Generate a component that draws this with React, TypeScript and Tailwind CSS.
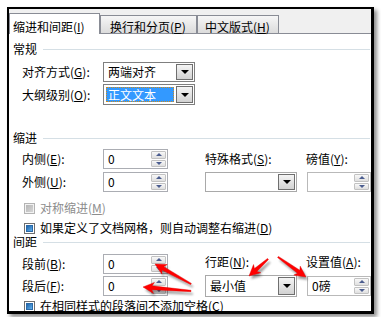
import React from "react";

const Acc = ({ k }: { k: string }) => (
  <>
    (<span className="underline">{k}</span>)
  </>
);

const Header = ({ title }: { title: string }) => (
  <div className="flex h-[16px] items-center pl-[4px] pr-[1px]">
    <span className="leading-[12px]">{title}</span>
    <div className="ml-[6px] h-px flex-1 bg-[#d5dfe5]" />
  </div>
);

const Label = ({ children, w = "w-[94px]" }: { children: React.ReactNode; w?: string }) => (
  <div className={`${w} shrink-0 pl-[13px] leading-[12px]`}>{children}</div>
);

const Tri = ({ up }: { up?: boolean }) =>
  up ? (
    <div className="h-0 w-0 border-b-[3px] border-l-[3px] border-r-[3px] border-b-[#4b5d8f] border-l-transparent border-r-transparent" />
  ) : (
    <div className="h-0 w-0 border-t-[3px] border-l-[3px] border-r-[3px] border-t-[#4b5d8f] border-l-transparent border-r-transparent" />
  );

const Spin = ({ value, w, light }: { value?: string; w: string; light?: boolean }) => (
  <div
    className={`${w} flex h-[20px] shrink-0 border bg-white ${
      light ? "border-[#b9b9b9]" : "border-[#abadb3]"
    }`}
  >
    <div className="flex flex-1 items-center pl-[4px] leading-[12px]">{value}</div>
    <div className="my-px mr-px flex w-[15px] flex-col gap-px">
      <div className="flex flex-1 items-center justify-center rounded-[1px] border border-[#c2c2c2] bg-linear-to-b from-[#f8f8f8] to-[#dfdfdf]">
        <Tri up />
      </div>
      <div className="flex flex-1 items-center justify-center rounded-[1px] border border-[#c2c2c2] bg-linear-to-b from-[#f8f8f8] to-[#dfdfdf]">
        <Tri />
      </div>
    </div>
  </div>
);

const Select = ({
  children,
  h = "h-[20px]",
  dark,
}: {
  children?: React.ReactNode;
  h?: string;
  dark?: boolean;
}) => (
  <div
    className={`flex w-[92px] ${h} shrink-0 border bg-white ${
      dark ? "border-[#7f7f7f]" : "border-[#a9a9a9]"
    }`}
  >
    <div className="flex min-w-0 flex-1 items-center">{children}</div>
    <div className="m-px flex w-[17px] items-center justify-center border border-[#6f6f6f] bg-linear-to-b from-[#f4f4f4] to-[#d2d2d2]">
      <div className="h-0 w-0 border-t-[4px] border-l-[4px] border-r-[4px] border-t-black border-l-transparent border-r-transparent" />
    </div>
  </div>
);

const Check = ({ disabled, children }: { disabled?: boolean; children: React.ReactNode }) => (
  <div className="flex h-[12px] items-center pl-[15px]">
    {disabled ? (
      <div className="flex h-[11px] w-[11px] shrink-0 items-center justify-center border border-[#b4b4b4] bg-[#f2f2f2]">
        <div className="h-[7px] w-[7px] bg-linear-to-br from-[#b5b5b5] to-[#d6d6d6]" />
      </div>
    ) : (
      <div className="flex h-[11px] w-[11px] shrink-0 items-center justify-center border border-[#6f6f6f] bg-white">
        <div className="h-[7px] w-[7px] border border-[#2b6aa8] bg-linear-to-br from-[#1f65ab] to-[#5fb0ec]" />
      </div>
    )}
    <span className={`ml-[5px] whitespace-nowrap leading-[12px] ${disabled ? "text-[#8d8d8d]" : ""}`}>
      {children}
    </span>
  </div>
);

function Arrow({ x1, y1, x2, y2 }: { x1: number; y1: number; x2: number; y2: number }) {
  const dx = x2 - x1;
  const dy = y2 - y1;
  const L = Math.hypot(dx, dy);
  const a = (Math.atan2(dy, dx) * 180) / Math.PI;
  const pts = `0,-0.7 ${L - 9},-1.9 ${L - 11},-5.5 ${L},0 ${L - 11},5.5 ${L - 9},1.9 0,0.7`;
  return (
    <g>
      <g transform="translate(2 3)">
        <polygon
          points={pts}
          transform={`translate(${x1} ${y1}) rotate(${a})`}
          fill="#000"
          opacity={0.4}
          filter="url(#ablur)"
        />
      </g>
      <polygon
        points={pts}
        transform={`translate(${x1} ${y1}) rotate(${a})`}
        fill="#ff0000"
        stroke="#e00000"
        strokeWidth={0.4}
      />
    </g>
  );
}

export default function App() {
  return (
    <div className="relative h-[317px] w-[381px] overflow-hidden bg-white pl-[7px] pt-[7px] font-['Noto_Sans_CJK_SC','Noto_Sans',sans-serif] text-[12px] text-black">
      <div className="flex h-[307px] w-[367px] flex-col overflow-hidden border-b-[3px] border-l-2 border-r-[3px] border-t-2 border-black bg-white shadow-[3px_3px_4px_rgba(0,0,0,0.45)]">
        {/* tabs */}
        <div className="flex h-[25px] shrink-0 items-end border-b border-[#898c95] bg-[#f0f0f0]">
          <div className="relative z-10 -mb-px h-[21px] w-[91px] shrink-0 whitespace-nowrap border-l border-r border-t border-[#898c95] bg-white pl-[3px] pt-[7px] leading-[12px]">
            缩进和间距<Acc k="I" />
          </div>
          <div className="h-[18px] w-[97px] shrink-0 whitespace-nowrap border border-b-0 border-[#898c95] bg-linear-to-b from-[#f6f6f6] to-[#dcdcdc] pl-[9px] pt-[5px] leading-[12px]">
            换行和分页<Acc k="P" />
          </div>
          <div className="h-[18px] w-[82px] shrink-0 whitespace-nowrap border border-b-0 border-[#898c95] bg-linear-to-b from-[#f6f6f6] to-[#dcdcdc] pl-[7px] pt-[5px] leading-[12px]">
            中文版式<Acc k="H" />
          </div>
        </div>

        {/* content */}
        <div className="flex flex-col">
          <div className="mt-[7px]">
            <Header title="常规" />
          </div>
          <div className="mt-[5px] flex h-[20px] items-center">
            <Label>
              对齐方式<Acc k="G" />:
            </Label>
            <Select dark>
              <span className="pl-[4px] leading-[12px]">两端对齐</span>
            </Select>
          </div>
          <div className="mt-[2px] flex h-[21px] items-center">
            <Label>
              大纲级别<Acc k="O" />:
            </Label>
            <Select dark h="h-[21px]">
              <div className="my-[2px] ml-[2px] mr-px flex h-[15px] flex-1 items-center border border-dotted border-[#d08a1a] bg-[#3399ff] pl-px leading-[12px] text-white">
                正文文本
              </div>
            </Select>
          </div>

          <div className="mt-[25px]">
            <Header title="缩进" />
          </div>
          <div className="mt-[3px] flex h-[20px] items-center">
            <Label>
              内侧<Acc k="E" />:
            </Label>
            <Spin value="0" w="w-[65px]" />
            <div className="ml-[37px] w-[92px] shrink-0 leading-[12px]">
              特殊格式<Acc k="S" />:
            </div>
            <div className="ml-[9px] leading-[12px]">
              磅值<Acc k="Y" />:
            </div>
          </div>
          <div className="mt-[3px] flex h-[20px] items-center">
            <Label>
              外侧<Acc k="U" />:
            </Label>
            <Spin value="0" w="w-[65px]" />
            <div className="ml-[37px]">
              <Select />
            </div>
            <div className="ml-[10px]">
              <Spin w="w-[64px]" light />
            </div>
          </div>

          <div className="mt-[10px]">
            <Check disabled>
              对称缩进<Acc k="M" />
            </Check>
          </div>
          <div className="mt-[8px]">
            <Check>
              如果定义了文档网格，则自动调整右缩进<Acc k="D" />
            </Check>
          </div>

          <Header title="间距" />
          <div className="mt-[4px] flex h-[20px] items-center">
            <Label>
              段前<Acc k="B" />:
            </Label>
            <Spin value="0" w="w-[65px]" />
            <div className="ml-[37px] w-[92px] shrink-0 -translate-y-[2px] leading-[12px]">
              行距<Acc k="N" />:
            </div>
            <div className="ml-[9px] -translate-y-[2px] leading-[12px]">
              设置值<Acc k="A" />:
            </div>
          </div>
          <div className="mt-[2px] flex h-[20px] items-center">
            <Label>
              段后<Acc k="F" />:
            </Label>
            <Spin value="0" w="w-[65px]" />
            <div className="ml-[37px]">
              <Select h="h-[22px]">
                <span className="pl-[4px] leading-[12px]">最小值</span>
              </Select>
            </div>
            <div className="ml-[10px]">
              <Spin value="0磅" w="w-[64px]" light />
            </div>
          </div>
          <div className="mt-[4px]">
            <Check>
              在相同样式的段落间不添加空格<Acc k="C" />
            </Check>
          </div>
        </div>
      </div>

      <svg className="pointer-events-none absolute left-0 top-0" width={381} height={317} viewBox="0 0 381 317">
        <defs>
          <filter id="ablur" x="-20%" y="-50%" width="140%" height="200%">
            <feGaussianBlur stdDeviation="1.2" />
          </filter>
        </defs>
        <Arrow x1={191} y1={284} x2={155} y2={264} />
        <Arrow x1={191} y1={291} x2={143} y2={287} />
        <Arrow x1={268} y1={259} x2={249} y2={276} />
        <Arrow x1={278} y1={257} x2={306} y2={277} />
      </svg>
    </div>
  );
}
